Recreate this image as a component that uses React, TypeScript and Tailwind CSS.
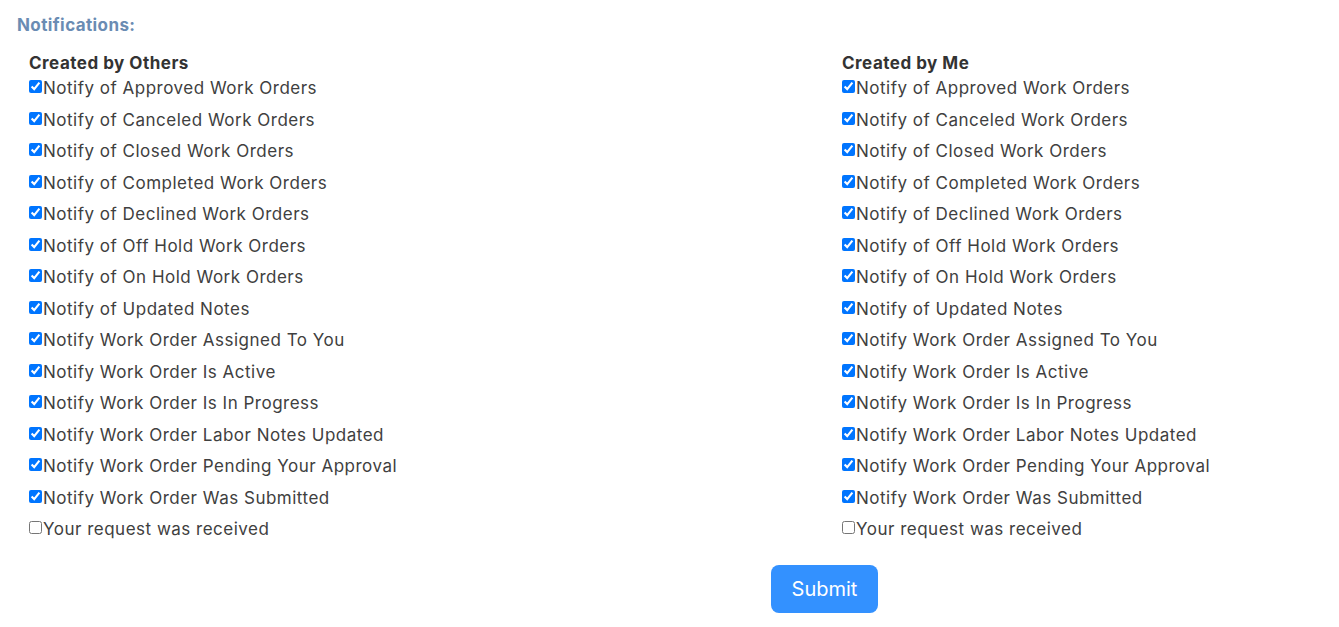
import { useState } from "react";

const items = [
  "Notify of Approved Work Orders",
  "Notify of Canceled Work Orders",
  "Notify of Closed Work Orders",
  "Notify of Completed Work Orders",
  "Notify of Declined Work Orders",
  "Notify of Off Hold Work Orders",
  "Notify of On Hold Work Orders",
  "Notify of Updated Notes",
  "Notify Work Order Assigned To You",
  "Notify Work Order Is Active",
  "Notify Work Order Is In Progress",
  "Notify Work Order Labor Notes Updated",
  "Notify Work Order Pending Your Approval",
  "Notify Work Order Was Submitted",
  "Your request was received",
];

function Column({ title }: { title: string }) {
  const [checked, setChecked] = useState(items.map((_, i) => i < items.length - 1));

  return (
    <div className="flex flex-col">
      <p className="h-[25px] text-[17px] font-bold leading-[25px] tracking-[0.5px] text-[#333]">{title}</p>
      {checked.map((on, i) => (
        <label key={items[i]} className="flex h-[31.5px] items-start text-[17px] leading-[25px] text-[#404040]">
          <input
            type="checkbox"
            checked={on}
            onChange={() => setChecked((prev) => prev.map((v, j) => (j === i ? !v : v)))}
            className="m-0 mt-[4px] h-[13px] w-[13px] shrink-0"
          />
          <span className="pl-[1px] tracking-[0.5px]">{items[i]}</span>
        </label>
      ))}
    </div>
  );
}

export default function App() {
  return (
    <div className="min-h-[627px] bg-white px-[17px] pt-[14px] font-['Inter',sans-serif]">
      <h2 className="text-[17px] font-bold leading-[22px] tracking-[0.4px] text-[#6a8cb3]">Notifications:</h2>
      <div className="mt-[15px] grid grid-cols-[813px_1fr] pl-[12px]">
        <Column title="Created by Others" />
        <Column title="Created by Me" />
      </div>
      <div className="mt-[16px] flex pl-[754px]">
        <button
          type="button"
          className="h-[48px] w-[107px] rounded-[8px] bg-[#3391ff] text-[20px] text-white"
        >
          Submit
        </button>
      </div>
    </div>
  );
}
